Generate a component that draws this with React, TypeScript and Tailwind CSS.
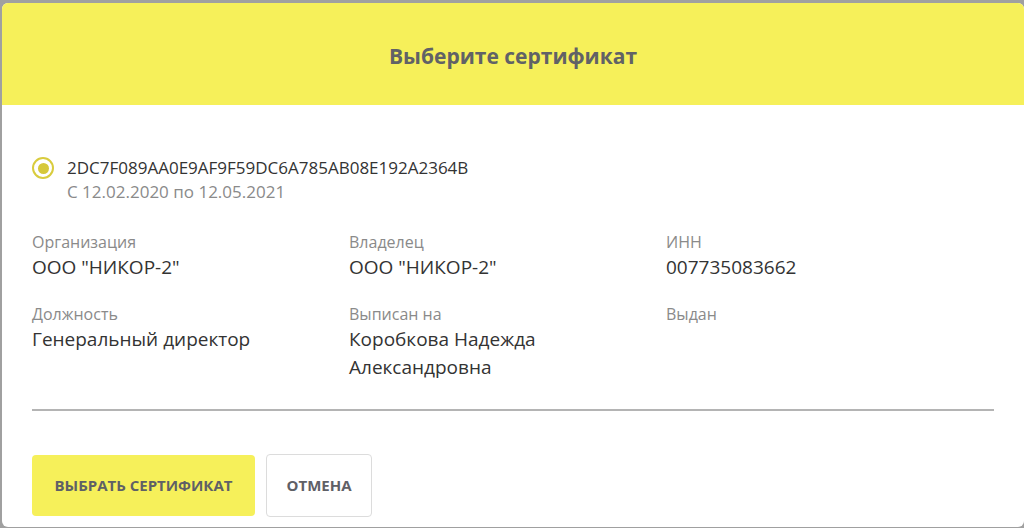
import React from "react";

const fields = [
  { label: "Организация", value: "ООО \"НИКОР-2\"" },
  { label: "Владелец", value: "ООО \"НИКОР-2\"" },
  { label: "ИНН", value: "007735083662" },
  { label: "Должность", value: "Генеральный директор" },
  { label: "Выписан на", value: "Коробкова Надежда Александровна" },
  { label: "Выдан", value: "" },
];

export default function App() {
  return (
    <div
      className="w-[1024px] h-[528px] overflow-hidden bg-[#a0a0a0] pt-[3px] pl-[2px]"
      style={{ fontFamily: '"Open Sans", "Liberation Sans", sans-serif' }}
    >
      <div className="h-[524px] bg-white rounded-md overflow-hidden flex flex-col">
        {/* Header */}
        <div className="h-[102px] shrink-0 bg-[#f6f05a] flex items-center justify-center pt-[5px]">
          <h2 className="text-[21px] font-bold text-[#616266]">
            Выберите сертификат
          </h2>
        </div>

        {/* Body */}
        <div className="px-[30px] pt-[51px]">
          <div className="flex items-start gap-[13px]">
            <span className="mt-[1px] w-[22px] h-[22px] rounded-full border-[2.5px] border-[#d9cc3e] flex items-center justify-center shrink-0">
              <span className="w-[11px] h-[11px] rounded-full bg-[#d6c83a]" />
            </span>
            <div>
              <div className="text-[17px] leading-[24px] text-[#333]">
                2DC7F089AA0E9AF9F59DC6A785AB08E192A2364B
              </div>
              <div className="text-[17px] leading-[24px] text-[#8a8a8a]">
                С 12.02.2020 по 12.05.2021
              </div>
            </div>
          </div>

          <div className="mt-[27px] grid grid-cols-[317px_317px_1fr] gap-y-[22px]">
            {fields.map((f) => (
              <div key={f.label} className="pr-4">
                <div className="text-[16px] leading-[22px] text-[#8a8a8a]">{f.label}</div>
                {f.value && (
                  <div className="text-[19px] leading-[28px] text-[#333] max-w-[230px]">
                    {f.value}
                  </div>
                )}
              </div>
            ))}
          </div>

          <div className="mt-[28px] h-[2px] bg-[#b4b4b4]" />

          <div className="mt-[43px] flex items-center gap-[11px]">
            <button className="w-[223px] h-[61px] rounded bg-[#f6f05a] text-[15px] font-bold uppercase text-[#5f6066]">
              Выбрать сертификат
            </button>
            <button className="w-[106px] h-[63px] rounded border border-[#dcdcdc] bg-white text-[15px] font-bold uppercase text-[#5f6066]">
              Отмена
            </button>
          </div>
        </div>
      </div>
    </div>
  );
}
